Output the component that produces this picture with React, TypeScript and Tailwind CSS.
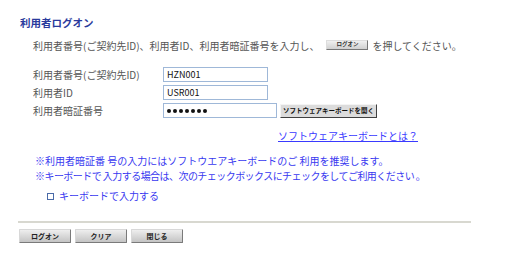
import * as React from "react"

const jp = { fontFamily: '"Noto Sans CJK JP", "Noto Sans", sans-serif' }

function GrayButton({ label }: { label: string }) {
    return (
        <div className="flex items-center justify-center w-[52px] h-[14px] bg-gradient-to-b from-[#eeeeee] to-[#c4c4c4] border border-[#d8d8d8] border-r-[#7a7a7a] border-b-[#7a7a7a] rounded-[1px]">
            <span className="text-[7px] font-bold text-[#222] leading-none">{label}</span>
        </div>
    )
}

function Field({ label, value, wide, children }: { label: string; value: React.ReactNode; wide?: boolean; children?: React.ReactNode }) {
    return (
        <div className="flex items-center h-[15px]">
            <span className="w-[130px] text-[10px] leading-[15px] text-[#555]">{label}</span>
            <div className={`${wide ? "w-[114px]" : "w-[105px]"} h-[15px] border border-[#9fb8d8] bg-white flex items-center px-[3px]`}>
                <span className="text-[9px] leading-none text-[#111]">{value}</span>
            </div>
            {children}
        </div>
    )
}

export default function App() {
    const dots = (
        <span className="flex gap-[2px]">
            {Array.from({ length: 7 }).map((_, i) => (
                <span key={i} className="w-[4px] h-[4px] rounded-full bg-[#111]" />
            ))}
        </span>
    )

    return (
        <div className="w-[527px] h-[255px] bg-white overflow-hidden" style={jp}>
            {/* Title */}
            <div className="pt-[8px] pl-[20px] h-[22px]">
                <span className="text-[10.5px] font-bold leading-[14px] text-[#2a3a9c]">利用者ログオン</span>
            </div>

            {/* Instruction */}
            <div className="mt-[15px] pl-[33px] flex items-center h-[16px] text-[10px] text-[#555]">
                <span>利用者番号(ご契約先ID)、利用者ID、利用者暗証番号を入力し、</span>
                <span className="ml-[7px] mr-[4px] inline-flex items-center justify-center w-[42px] h-[10px] bg-gradient-to-b from-[#f0f0f0] to-[#d0d0d0] border border-[#dddddd] border-r-[#777] border-b-[#777]">
                    <span className="text-[5.5px] font-bold text-[#333] leading-none">ログオン</span>
                </span>
                <span>を押してください。</span>
            </div>

            {/* Form */}
            <div className="mt-[14px] pl-[33px] flex flex-col gap-[3px]">
                <Field label="利用者番号(ご契約先ID)" value="HZN001" />
                <Field label="利用者ID" value="USR001" />
                <Field label="利用者暗証番号" value={dots} wide>
                    <div className="ml-[3px] flex items-center justify-center w-[97px] h-[14px] bg-[#dcdcdc] border border-[#f4f4f4] border-r-[#404040] border-b-[#404040]">
                        <span className="text-[6.5px] font-bold text-[#111] leading-none">ソフトウェアキーボードを開く</span>
                    </div>
                </Field>
            </div>

            {/* Link */}
            <div className="mt-[3px] pl-[278px] h-[14px]">
                <span className="text-[10px] leading-[14px] text-[#3a3aff] underline">ソフトウェアキーボードとは？</span>
            </div>

            {/* Notes */}
            <div className="mt-[18px] pl-[35px] text-[10px] leading-[15px] text-[#3838f0]">
                <div>※利用者暗証番 号の入力にはソフトウエアキーボードのご 利用を推奨します。</div>
                <div className="tracking-[-0.55px]">※キーボードで 入力する場合は、次のチェックボックスにチェックをしてご利用ください 。</div>
            </div>

            {/* Checkbox */}
            <div className="mt-[6px] pl-[47px] flex items-center h-[14px]">
                <span className="w-[7px] h-[7px] border border-[#4a6aa8] bg-white" />
                <span className="ml-[5px] text-[10px] leading-[14px] text-[#3838f0]">キーボードで入力する</span>
            </div>

            {/* Separator */}
            <div className="mt-[18px] ml-[18px] w-[453px] h-[2px] bg-[#d8d8d0]" />

            {/* Buttons */}
            <div className="mt-[6px] ml-[19px] flex gap-[4px]">
                <GrayButton label="ログオン" />
                <GrayButton label="クリア" />
                <GrayButton label="閉じる" />
            </div>
        </div>
    )
}
